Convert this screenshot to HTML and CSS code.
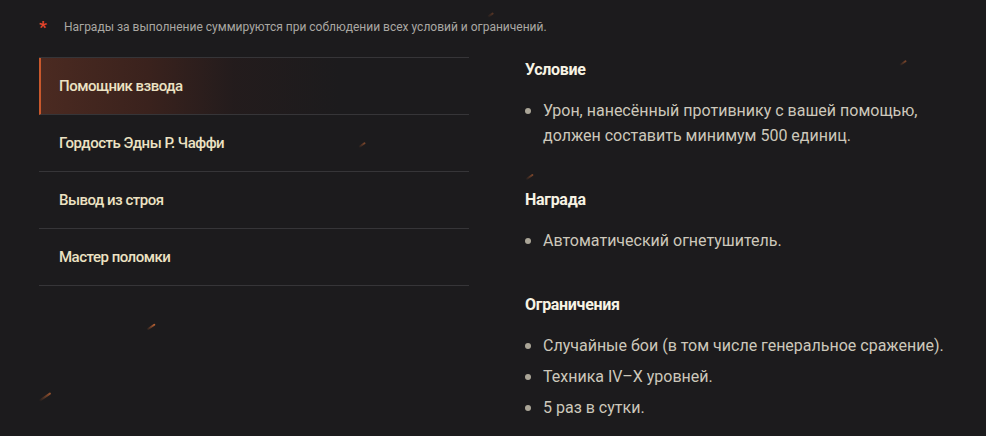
FILE: index.html
```html
<!DOCTYPE html>
<html lang="ru">
<head>
    <meta charset="UTF-8">
    <meta name="viewport" content="width=device-width, initial-scale=1.0">
    <title>Боевые задачи</title>
    <link rel="stylesheet" href="styles.css">
</head>
<body>
    <div class="page">
        <div class="spark s1"></div>
        <div class="spark s2"></div>
        <div class="spark s3"></div>
        <div class="spark s4"></div>
        <div class="spark s5"></div>
        <div class="spark s6"></div>

        <p class="note">
            <span class="note-star">*</span>
            Награды за выполнение суммируются при соблюдении всех условий и ограничений.
        </p>

        <div class="mission">
            <ul class="tabs">
                <li class="tab active">Помощник взвода</li>
                <li class="tab">Гордость Эдны Р. Чаффи</li>
                <li class="tab">Вывод из строя</li>
                <li class="tab">Мастер поломки</li>
            </ul>

            <div class="details">
                <div class="section">
                    <h3>Условие</h3>
                    <ul>
                        <li>Урон, нанесённый противнику с вашей помощью, должен составить минимум 500 единиц.</li>
                    </ul>
                </div>
                <div class="section">
                    <h3>Награда</h3>
                    <ul>
                        <li>Автоматический огнетушитель.</li>
                    </ul>
                </div>
                <div class="section">
                    <h3>Ограничения</h3>
                    <ul>
                        <li>Случайные бои (в том числе генеральное сражение).</li>
                        <li>Техника IV–X уровней.</li>
                        <li>5 раз в сутки.</li>
                    </ul>
                </div>
            </div>
        </div>
    </div>
</body>
</html>
```

FILE: styles.css
```css
* {
    margin: 0;
    padding: 0;
    box-sizing: border-box;
}

body {
    font-family: Roboto, 'Liberation Sans', sans-serif;
    background: #1c1b1d;
    color: #cdc8bb;
    height: 436px;
    overflow: hidden;
}

.page {
    position: relative;
    padding: 17px 0 0 39px;
}

.note {
    display: flex;
    align-items: center;
    height: 20px;
    font-size: 12px;
    line-height: 20px;
    color: #aaa8a3;
    margin-bottom: 20px;
}

.note-star {
    color: #e5462c;
    font-size: 17px;
    line-height: 20px;
    font-weight: bold;
    width: 25px;
}

.mission {
    display: grid;
    grid-template-columns: 430px 1fr;
    column-gap: 56px;
}

.tabs {
    list-style: none;
    border-top: 1px solid #363538;
}

.tab {
    height: 57px;
    display: flex;
    align-items: center;
    padding-left: 20px;
    border-bottom: 1px solid #363538;
    font-size: 15px;
    font-weight: 500;
    letter-spacing: -0.5px;
    color: #ece2c3;
}

.tab.active {
    border-left: 2px solid #c9582c;
    padding-left: 18px;
    background: linear-gradient(90deg, #4b2a21 0%, #3a221d 25%, rgba(40, 28, 28, 0.6) 45%, rgba(28, 27, 29, 0) 70%);
}

.details {
    padding-top: 1px;
}

.section {
    margin-bottom: 40px;
}

.section:last-child {
    margin-bottom: 0;
}

.section h3 {
    font-size: 16px;
    line-height: 24px;
    font-weight: bold;
    letter-spacing: -0.3px;
    color: #f7f3e4;
    margin-bottom: 16px;
}

.section ul {
    list-style: none;
}

.section li {
    position: relative;
    padding-left: 18px;
    font-size: 16px;
    line-height: 25px;
    margin-bottom: 6px;
    max-width: 430px;
}

.section li:last-child {
    margin-bottom: 0;
}

.section li::before {
    content: '';
    position: absolute;
    left: 0;
    top: 10px;
    width: 6px;
    height: 6px;
    border-radius: 50%;
    background: #aaa597;
}

/* искры на фоне */
.spark {
    position: absolute;
    width: 10px;
    height: 2px;
    border-radius: 2px;
    background: linear-gradient(90deg, rgba(230, 90, 40, 0), #f07a3a);
    transform: rotate(-35deg);
    opacity: 0.8;
}

.s1 { left: 146px; top: 326px; }
.s2 { left: 38px; top: 396px; width: 14px; opacity: 0.6; }
.s3 { left: 358px; top: 144px; width: 8px; opacity: 0.5; }
.s4 { left: 899px; top: 62px; width: 8px; opacity: 0.5; }
.s5 { left: 525px; top: 176px; width: 9px; opacity: 0.5; }
.s6 { left: 487px; top: 14px; width: 7px; opacity: 0.3; }
```
